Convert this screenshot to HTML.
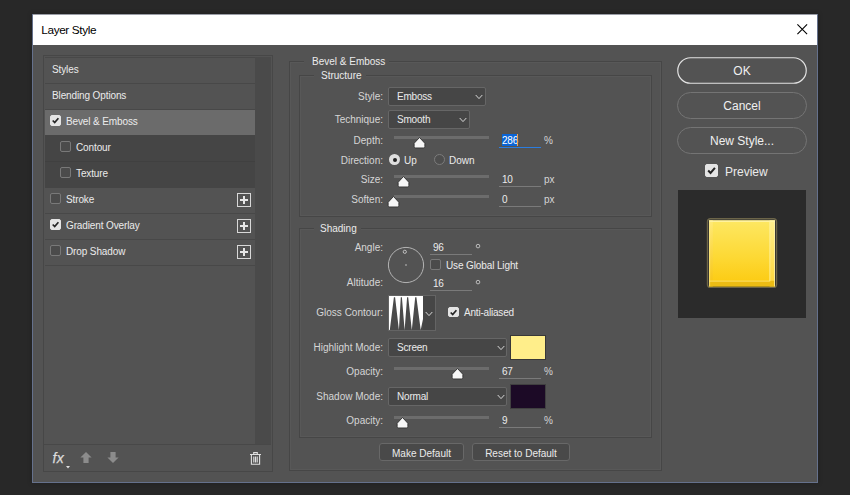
<!DOCTYPE html>
<html><head><meta charset="utf-8"><title>Layer Style</title>
<style>
*{box-sizing:border-box;margin:0;padding:0}
html,body{width:850px;height:495px;overflow:hidden;background:#282828}
body{font-family:"Liberation Sans",sans-serif;font-size:10px;color:#ebebeb;position:relative}
.a{position:absolute}
.t{position:absolute;white-space:nowrap;line-height:12px;height:12px}
.r{text-align:right}
#dlg{left:32px;top:14px;width:786px;height:469px;background:#535353;border:1px solid #65718c;border-top:none;box-shadow:0 0 5px rgba(0,0,0,0.22)}
#title{left:33px;top:14px;width:784px;height:31px;background:#fff;border-top:1px solid #9a9da6}
.row{position:absolute;left:45px;width:210px;height:26px;background:#535353;border-bottom:1px solid #484848}
.cb{position:absolute;width:11px;height:11px;border:1px solid #797979;border-radius:2px;background:#4b4b4b}
.cb.on{background:#e4e4e4;border-color:#e4e4e4}
.plus{position:absolute;left:237px;width:14px;height:14px;border:1px solid #d8d8d8}
.plus:before{content:"";position:absolute;left:2px;top:5px;width:8px;height:2px;background:#e6e6e6}
.plus:after{content:"";position:absolute;left:5px;top:2px;width:2px;height:8px;background:#e6e6e6}
.fs{position:absolute;border:1px solid #464646;box-shadow:inset 0 0 0 1px #585858}
.lg{position:absolute;background:#535353;padding:0 4px 0 8px}
.dd{position:absolute;background:#464646;border:1px solid #666;border-radius:2px;height:19px}
.trk{position:absolute;height:3px;background:#6c6c6c;width:95px}
.inp{position:absolute;height:1px;background:#7a7a7a;width:42px}
.btn{position:absolute;border:1px solid #747474;border-radius:14px;height:27px;left:677px;width:130px;text-align:center;font-size:12px;line-height:26px;color:#f0f0f0}
.sb{position:absolute;border:1px solid #686868;border-radius:3px;height:18px;background:#494949;text-align:center;line-height:17px;padding-top:1px}

.chk{position:absolute;left:1px;top:1px}
svg{position:absolute;overflow:visible}
</style></head><body>
<div class="a" id="dlg"></div>
<div class="a" id="title"></div>
<div class="t" style="left:41.3px;top:23px;font-size:11.8px;color:#000;line-height:14px;height:14px;letter-spacing:-0.38px">Layer Style</div>
<svg style="left:796.7px;top:23.8px" width="10.5" height="10.5" viewBox="0 0 10.5 10.5"><path d="M0.4 0.4L10.1 10.1M10.1 0.4L0.4 10.1" stroke="#000" stroke-width="1.1" fill="none"/></svg>

<!-- left panel -->
<div class="a" style="left:43px;top:55px;width:230px;height:417px;border:1px solid #474747;background:#535353"></div>
<div class="a" style="left:255px;top:57px;width:16px;height:387px;background:#4a4a4a"></div>
<div class="a" style="left:45px;top:57px;width:210px;height:1px;background:#484848"></div>
<div class="row" style="top:58px"></div>
<div class="row" style="top:84px"></div>
<div class="row" style="top:110px;background:#6b6b6b;border-bottom-color:#454545"></div>
<div class="row" style="top:136px;background:#454545;border-bottom-color:#404040"></div>
<div class="row" style="top:162px;background:#454545;border-bottom-color:#454545"></div>
<div class="row" style="top:188px"></div>
<div class="row" style="top:214px"></div>
<div class="row" style="top:240px"></div>
<div class="t" style="left:52px;top:64px;letter-spacing:-0.12px">Styles</div>
<div class="t" style="left:52px;top:90px;letter-spacing:-0.12px">Blending Options</div>
<div class="t" style="left:66px;top:116px;letter-spacing:-0.12px">Bevel &amp; Emboss</div>
<div class="t" style="left:76px;top:142px;letter-spacing:-0.12px">Contour</div>
<div class="t" style="left:76px;top:168px;letter-spacing:-0.12px">Texture</div>
<div class="t" style="left:66px;top:194px;letter-spacing:-0.12px">Stroke</div>
<div class="t" style="left:66px;top:220px;letter-spacing:-0.12px">Gradient Overlay</div>
<div class="t" style="left:66px;top:246px;letter-spacing:-0.12px">Drop Shadow</div>
<div class="cb on" style="left:50px;top:115px"></div>
<div class="cb" style="left:60px;top:141px"></div>
<div class="cb" style="left:60px;top:167px"></div>
<div class="cb" style="left:50px;top:193px"></div>
<div class="cb on" style="left:50px;top:219px"></div>
<div class="cb" style="left:50px;top:245px"></div>
<div class="plus" style="top:193px"></div>
<div class="plus" style="top:219px"></div>
<div class="plus" style="top:245px"></div>
<!-- toolbar -->
<div class="a" style="left:44px;top:444px;width:227px;height:26px;background:#535353;border-top:1px solid #484848"></div>

<!-- center -->
<div class="fs" style="left:289px;top:61px;width:373px;height:410px"></div>
<div class="lg t" style="left:304px;top:56px">Bevel &amp; Emboss</div>
<div class="fs" style="left:299px;top:75px;width:353px;height:142px"></div>
<div class="lg t" style="left:314px;top:70px;padding-left:7px">Structure</div>
<div class="fs" style="left:299px;top:228px;width:353px;height:210px"></div>
<div class="lg t" style="left:314px;top:223px;padding-left:6px">Shading</div>

<div class="t r" style="left:283px;width:100px;top:91px;color:#d6d6d6">Style:</div>
<div class="dd" style="left:388px;top:87px;width:98px"></div>
<div class="t" style="left:397px;top:91px;letter-spacing:-0.2px">Emboss</div>
<div class="t r" style="left:283px;width:100px;top:114px;color:#d6d6d6">Technique:</div>
<div class="dd" style="left:388px;top:110px;width:82px"></div>
<div class="t" style="left:397px;top:114px;letter-spacing:-0.2px">Smooth</div>
<div class="t r" style="left:283px;width:100px;top:135px;color:#d6d6d6">Depth:</div>
<div class="trk" style="left:394px;top:136px"></div>
<div class="a" style="left:502px;top:134px;width:15.5px;height:12px;background:#0a64d6"></div>
<div class="t" style="left:502px;top:135px;color:#fff;letter-spacing:-0.2px">286</div>
<div class="inp" style="left:499px;top:147px;background:#2b7de0"></div>
<div class="t" style="left:544px;top:135px;color:#d6d6d6">%</div>
<div class="t r" style="left:283px;width:100px;top:155px;color:#d6d6d6">Direction:</div>
<div class="t" style="left:404px;top:155px">Up</div>
<div class="t" style="left:449px;top:155px">Down</div>
<div class="t r" style="left:283px;width:100px;top:174px;color:#d6d6d6">Size:</div>
<div class="trk" style="left:394px;top:175px"></div>
<div class="t" style="left:502px;top:174px;letter-spacing:-0.2px">10</div>
<div class="inp" style="left:499px;top:186px"></div>
<div class="t" style="left:544px;top:174px;color:#d6d6d6">px</div>
<div class="t r" style="left:283px;width:100px;top:194px;color:#d6d6d6">Soften:</div>
<div class="trk" style="left:394px;top:195px"></div>
<div class="t" style="left:502px;top:194px;letter-spacing:-0.2px">0</div>
<div class="inp" style="left:499px;top:206px"></div>
<div class="t" style="left:544px;top:194px;color:#d6d6d6">px</div>

<div class="t r" style="left:283px;width:100px;top:242px;color:#d6d6d6">Angle:</div>
<div class="t" style="left:433px;top:242px;letter-spacing:-0.2px">96</div>
<div class="inp" style="left:430px;top:254px"></div>
<svg style="left:474.5px;top:243px" width="6" height="6" viewBox="0 0 6 6"><circle cx="3" cy="3.1" r="1.8" fill="none" stroke="#cccccc" stroke-width="0.85"/></svg>
<div class="cb" style="left:430px;top:259px;width:11px;height:11px"></div>
<div class="t" style="left:446px;top:260px;letter-spacing:-0.12px">Use Global Light</div>
<div class="t r" style="left:283px;width:100px;top:277px;color:#d6d6d6">Altitude:</div>
<div class="t" style="left:433px;top:278px;letter-spacing:-0.2px">16</div>
<div class="inp" style="left:430px;top:290px"></div>
<svg style="left:474.5px;top:279px" width="6" height="6" viewBox="0 0 6 6"><circle cx="3" cy="3.1" r="1.8" fill="none" stroke="#cccccc" stroke-width="0.85"/></svg>
<div class="t r" style="left:283px;width:100px;top:307px;color:#d6d6d6">Gloss Contour:</div>
<div class="a" style="left:388px;top:295px;width:36px;height:36px;background:#fff;border:1px solid #646464"></div>
<div class="a" style="left:423px;top:295px;width:12.5px;height:36px;background:#464646;border:1px solid #646464;border-left:none"></div>
<div class="cb on" style="left:448px;top:307px;width:11px;height:10px"></div>
<div class="t" style="left:464px;top:307px;letter-spacing:-0.2px">Anti-aliased</div>
<div class="t r" style="left:283px;width:100px;top:342px;color:#d6d6d6">Highlight Mode:</div>
<div class="dd" style="left:388px;top:338px;width:119px"></div>
<div class="t" style="left:397px;top:342px;letter-spacing:-0.2px">Screen</div>
<div class="a" style="left:510px;top:335px;width:36px;height:25px;background:#ffee8a;border:1px solid #383838"></div>
<div class="t r" style="left:283px;width:100px;top:366px;color:#d6d6d6">Opacity:</div>
<div class="trk" style="left:394px;top:367px"></div>
<div class="t" style="left:502px;top:366px;letter-spacing:-0.2px">67</div>
<div class="inp" style="left:499px;top:378px"></div>
<div class="t" style="left:544px;top:366px;color:#d6d6d6">%</div>
<div class="t r" style="left:283px;width:100px;top:391px;color:#d6d6d6">Shadow Mode:</div>
<div class="dd" style="left:388px;top:387px;width:119px"></div>
<div class="t" style="left:397px;top:391px;letter-spacing:-0.2px">Normal</div>
<div class="a" style="left:510px;top:384px;width:36px;height:25px;background:#1c0a26;border:1px solid #404040"></div>
<div class="t r" style="left:283px;width:100px;top:415px;color:#d6d6d6">Opacity:</div>
<div class="trk" style="left:394px;top:416px"></div>
<div class="t" style="left:502px;top:415px;letter-spacing:-0.2px">9</div>
<div class="inp" style="left:499px;top:427px"></div>
<div class="t" style="left:544px;top:415px;color:#d6d6d6">%</div>
<div class="sb" style="left:379px;top:443px;width:85px">Make Default</div>
<div class="sb" style="left:472px;top:443px;width:98px">Reset to Default</div>

<svg style="left:474.5px;top:94px" width="8" height="6" viewBox="0 0 8 6"><path d="M0.7 1L4 4.6L7.3 1" fill="none" stroke="#d8d8d8" stroke-width="1"/></svg>
<svg style="left:458.5px;top:117px" width="8" height="6" viewBox="0 0 8 6"><path d="M0.7 1L4 4.6L7.3 1" fill="none" stroke="#d8d8d8" stroke-width="1"/></svg>
<svg style="left:496.5px;top:345px" width="8" height="6" viewBox="0 0 8 6"><path d="M0.7 1L4 4.6L7.3 1" fill="none" stroke="#d8d8d8" stroke-width="1"/></svg>
<svg style="left:496.5px;top:394px" width="8" height="6" viewBox="0 0 8 6"><path d="M0.7 1L4 4.6L7.3 1" fill="none" stroke="#d8d8d8" stroke-width="1"/></svg>
<svg style="left:425px;top:311px" width="8" height="6" viewBox="0 0 8 6"><path d="M0.7 1L4 4.6L7.3 1" fill="none" stroke="#d8d8d8" stroke-width="1"/></svg>
<svg style="left:50px;top:115px" width="11" height="11" viewBox="0 0 11 11"><path d="M2.7 5.5L4.7 7.6L8.4 3.3" fill="none" stroke="#242424" stroke-width="1.7"/></svg>
<svg style="left:50px;top:219px" width="11" height="11" viewBox="0 0 11 11"><path d="M2.7 5.5L4.7 7.6L8.4 3.3" fill="none" stroke="#242424" stroke-width="1.7"/></svg>
<svg style="left:448px;top:307px" width="11" height="11" viewBox="0 0 11 11"><path d="M2.7 5.5L4.7 7.6L8.4 3.3" fill="none" stroke="#242424" stroke-width="1.7"/></svg>

<div class="a" style="left:389px;top:154px;width:11px;height:11px;border-radius:50%;background:#dedede"></div><div class="a" style="left:392.5px;top:157.5px;width:4px;height:4px;border-radius:50%;background:#222"></div>
<div class="a" style="left:434px;top:154px;width:11px;height:11px;border-radius:50%;border:1px solid #7c7c7c;background:#4e4e4e"></div>
<svg style="left:387px;top:246px" width="38" height="38" viewBox="0 0 38 38"><circle cx="19" cy="19" r="17.6" fill="none" stroke="#b4b4b4" stroke-width="1"/><circle cx="17.8" cy="5.8" r="1.6" fill="none" stroke="#c8c8c8" stroke-width="0.9"/><circle cx="19" cy="19" r="0.8" fill="#c8c8c8"/></svg>
<svg style="left:389px;top:296px" width="34" height="34" viewBox="0 0 34 34"><rect width="34" height="34" fill="#fff"/><path d="M0.8 34L4.9 1.2H6.1L9.9 34L11.8 1.2H12.9L15.6 34L18.1 1.2H19.2L22.8 34L26.2 1.2H27.4L31.7 34L34 23V34Z" fill="#4a4a4a"/></svg>
<div class="a" style="left:517px;top:134px;width:1px;height:12px;background:#f0a050"></div>
<div class="t" style="left:52.6px;top:450px;font-size:14px;line-height:16px;height:16px;font-style:italic;color:#dcdcdc;letter-spacing:0.2px;-webkit-text-stroke:0.25px #dcdcdc">fx</div>
<svg style="left:66px;top:466px" width="4" height="3" viewBox="0 0 4 3"><path d="M0 0H4L2 2.4Z" fill="#e0e0e0"/></svg>
<svg style="left:80px;top:452px" width="12" height="11" viewBox="0 0 12 11"><path d="M6 0L11.6 5.6H8.6V11H3.4V5.6H0.4Z" fill="#8c8c8c"/></svg>
<svg style="left:107px;top:452px" width="12" height="11" viewBox="0 0 12 11"><path d="M6 11L11.6 5.4H8.6V0H3.4V5.4H0.4Z" fill="#8c8c8c"/></svg>
<svg style="left:250px;top:452px" width="11" height="13" viewBox="0 0 11 13"><path d="M0 2.5H11M3.7 2.3V0.6H7.3V2.3M1.4 3V12.2H9.6V3M3.8 4.5V10.5M5.5 4.5V10.5M7.2 4.5V10.5" fill="none" stroke="#e0e0e0" stroke-width="1.1"/></svg>
<svg style="left:413.2px;top:136px" width="13" height="13" viewBox="0 0 13 13"><path d="M6.5 1.5L11.9 7.3V10.4Q11.9 12 10.3 12H2.7Q1.1 12 1.1 10.4V7.3Z" fill="#f6f6f6" stroke="#363636" stroke-width="1" stroke-linejoin="round"/></svg>
<svg style="left:396.7px;top:175px" width="13" height="13" viewBox="0 0 13 13"><path d="M6.5 1.5L11.9 7.3V10.4Q11.9 12 10.3 12H2.7Q1.1 12 1.1 10.4V7.3Z" fill="#f6f6f6" stroke="#363636" stroke-width="1" stroke-linejoin="round"/></svg>
<svg style="left:386.5px;top:195px" width="13" height="13" viewBox="0 0 13 13"><path d="M6.5 1.5L11.9 7.3V10.4Q11.9 12 10.3 12H2.7Q1.1 12 1.1 10.4V7.3Z" fill="#f6f6f6" stroke="#363636" stroke-width="1" stroke-linejoin="round"/></svg>
<svg style="left:450.8px;top:367px" width="13" height="13" viewBox="0 0 13 13"><path d="M6.5 1.5L11.9 7.3V10.4Q11.9 12 10.3 12H2.7Q1.1 12 1.1 10.4V7.3Z" fill="#f6f6f6" stroke="#363636" stroke-width="1" stroke-linejoin="round"/></svg>
<svg style="left:395.7px;top:416px" width="13" height="13" viewBox="0 0 13 13"><path d="M6.5 1.5L11.9 7.3V10.4Q11.9 12 10.3 12H2.7Q1.1 12 1.1 10.4V7.3Z" fill="#f6f6f6" stroke="#363636" stroke-width="1" stroke-linejoin="round"/></svg>
<!-- right -->
<div class="btn" style="top:57px;border-color:transparent">OK</div>
<svg style="left:677px;top:57px" width="130" height="27" viewBox="0 0 130 27"><rect x="0.75" y="0.75" width="128.5" height="25.5" rx="12.75" fill="none" stroke="#e2e2e2" stroke-width="1.2"/></svg>
<div class="btn" style="top:92px">Cancel</div>
<div class="btn" style="top:127px">New Style...</div>
<div class="cb on" style="left:705px;top:164px;width:13px;height:13px"></div>
<div class="t" style="left:725px;top:165px;font-size:12px;line-height:14px;height:14px">Preview</div>
<div class="a" style="left:678px;top:190px;width:128px;height:128px;background:#2b2b2b"></div>
<svg style="left:704px;top:216px" width="76" height="76" viewBox="0 0 76 76">
<defs><linearGradient id="yg" x1="0" y1="0" x2="0" y2="1"><stop offset="0" stop-color="#fde762"/><stop offset="0.55" stop-color="#fdd935"/><stop offset="1" stop-color="#fcc90e"/></linearGradient>
<linearGradient id="yr" x1="0" y1="0" x2="0" y2="1"><stop offset="0" stop-color="#ffef8e"/><stop offset="1" stop-color="#ffd63a"/></linearGradient>
<linearGradient id="yl" x1="0" y1="0" x2="0" y2="1"><stop offset="0" stop-color="#ffea78"/><stop offset="1" stop-color="#f7c412"/></linearGradient></defs>
<rect x="3.5" y="2.8" width="69" height="68.6" rx="3" fill="none" stroke="#f6df8a" stroke-opacity="0.32" stroke-width="1.4"/>
<rect x="5.2" y="4.4" width="65.6" height="66" fill="url(#yg)"/>
<rect x="5.2" y="4.4" width="3.6" height="66" fill="url(#yl)"/>
<rect x="65.6" y="4.4" width="5.2" height="66" fill="url(#yr)"/>
<rect x="5.2" y="64.8" width="65.6" height="5.6" fill="#ecbc14"/>
<rect x="5.2" y="64.6" width="61" height="1" fill="#ffe36a"/>
<rect x="5.2" y="4.4" width="65.6" height="1.5" fill="#fff3a6"/>
<rect x="65.4" y="5" width="0.9" height="60" fill="#fff2a0" fill-opacity="0.8"/>
<rect x="70" y="4.4" width="0.9" height="66" fill="#fff4b0" fill-opacity="0.8"/>
<rect x="5.2" y="4.4" width="0.9" height="66" fill="#fff0a0" fill-opacity="0.7"/>
</svg>
<svg style="left:705px;top:164px" width="13" height="13" viewBox="0 0 11 11"><path d="M2.7 5.5L4.7 7.6L8.4 3.3" fill="none" stroke="#242424" stroke-width="1.7"/></svg>
</body></html>
